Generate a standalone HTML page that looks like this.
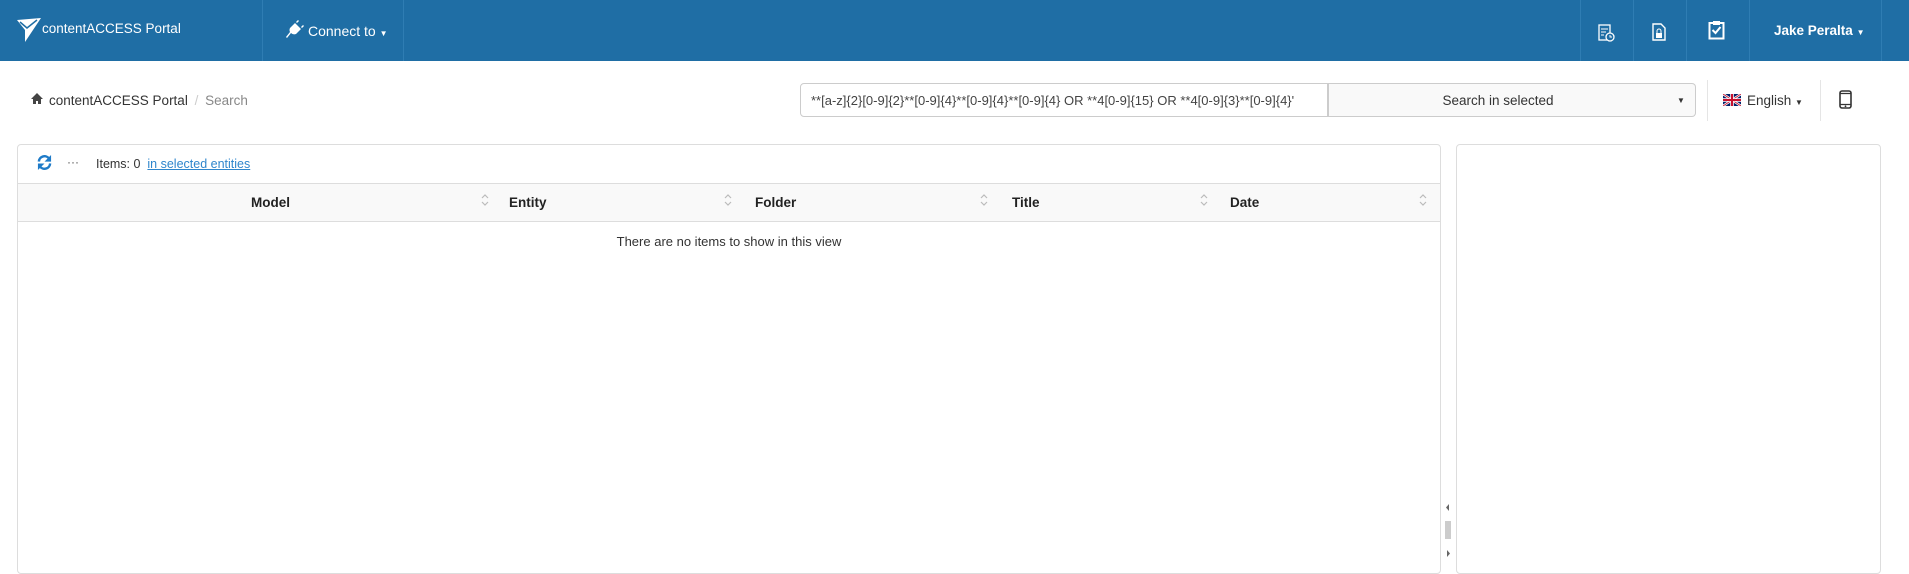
<!DOCTYPE html>
<html><head><meta charset="utf-8"><style>
*{box-sizing:border-box;margin:0;padding:0}
body{width:1909px;height:561px;overflow:hidden;background:#fff;font-family:"Liberation Sans",sans-serif;color:#333;position:relative}
.a{position:absolute;white-space:nowrap}
.nav{position:absolute;left:0;top:0;width:1909px;height:61px;background:#1f6ea5}
.vs{position:absolute;top:0;width:1px;height:61px;background:#2f7db3}
.w{color:#fff}
.th{font-weight:bold;font-size:13.5px;color:#222;top:195px}
.si{position:absolute;top:193px;width:8px;height:14px}
</style></head><body>
<div class="nav">
 <svg class="a" style="left:17px;top:18px" width="24" height="24" viewBox="0 0 24 24"><path d="M0 2 L24 0 L8 24 L8 12 Z" fill="#fff"/><path d="M3 4 L10 10 L20 2" fill="none" stroke="#1f6ea5" stroke-width="1.5"/></svg>
 <div class="a w" style="left:42px;top:21px;font-size:13.5px">contentACCESS Portal</div>
 <div class="vs" style="left:262px"></div>
 <svg class="a" style="left:284px;top:20px" width="20" height="20" viewBox="0 0 20 20"><path d="M11 3 L17 9 L12 14 Q9 15 7 13 L3 18 L2 17 L6 12 Q5 10 6 8 Z M12 2 L14 0 L15 1 L13 3 Z M17 7 L19 5 L20 6 L18 8 Z" fill="#fff"/></svg>
 <div class="a w" style="left:308px;top:23px;font-size:14px">Connect to <span style="font-size:8px">▼</span></div>
 <div class="vs" style="left:403px"></div>
 <div class="vs" style="left:1580px"></div><div class="vs" style="left:1633px"></div><div class="vs" style="left:1686px"></div><div class="vs" style="left:1749px"></div><div class="vs" style="left:1881px"></div>
 <svg class="a" style="left:1598px;top:24px" width="17" height="18" viewBox="0 0 17 18"><rect x="1" y="1" width="11" height="15" fill="none" stroke="#fff" stroke-width="1.3"/><path d="M3 5h7M3 8h5M3 11h3" stroke="#fff"/><circle cx="12" cy="13" r="4" fill="#1f6ea5" stroke="#fff" stroke-width="1.3"/><path d="M12 11v2h2" stroke="#fff" fill="none"/></svg>
 <svg class="a" style="left:1652px;top:23px" width="14" height="18" viewBox="0 0 14 18"><path d="M1 1h8l4 4v12H1z" fill="none" stroke="#fff" stroke-width="1.4"/><rect x="4" y="10" width="6" height="5" fill="#fff"/><path d="M5 10V8a2 2 0 0 1 4 0v2" fill="none" stroke="#fff"/></svg>
 <svg class="a" style="left:1708px;top:20px" width="17" height="20" viewBox="0 0 17 20"><rect x="1.5" y="3" width="14" height="15.5" fill="none" stroke="#fff" stroke-width="2"/><rect x="5" y="1" width="7" height="4" fill="#fff"/><path d="M4.5 10l3 3 5-6" fill="none" stroke="#fff" stroke-width="2"/></svg>
 <div class="a w" style="left:1774px;top:23px;font-size:13.5px;font-weight:bold">Jake Peralta <span style="font-size:8px">▼</span></div>
</div>
<svg class="a" style="left:31px;top:93px" width="12" height="11" viewBox="0 0 12 11"><path d="M6 0L12 6H10V11H7V8H5V11H2V6H0Z" fill="#444"/></svg>
<div class="a" style="left:49px;top:93px;font-size:13.5px;color:#333">contentACCESS Portal <span style="color:#ccc;margin:0 3px">/</span> <span style="color:#888">Search</span></div>
<div class="a" style="left:800px;top:83px;width:528px;height:34px;border:1px solid #ccc;border-radius:4px 0 0 4px;font-size:13px;padding:9px 10px;overflow:hidden;color:#444">**[a-z]{2}[0-9]{2}**[0-9]{4}**[0-9]{4}**[0-9]{4} OR **4[0-9]{15} OR **4[0-9]{3}**[0-9]{4}'</div>
<div class="a" style="left:1328px;top:83px;width:340px;height:34px;border:1px solid #ccc;background:#f9f9f9;text-align:center;font-size:13.5px;padding-top:9px">Search in selected</div>
<div class="a" style="left:1667px;top:83px;width:29px;height:34px;border:1px solid #ccc;border-left:none;border-radius:0 4px 4px 0;background:#f9f9f9;text-align:center;font-size:8px;padding-top:12px">▼</div>
<div class="a" style="left:1707px;top:80px;width:1px;height:41px;background:#e5e5e5"></div>
<svg class="a" style="left:1723px;top:94px" width="18" height="12" viewBox="0 0 60 40"><rect width="60" height="40" fill="#012169"/><path d="M0 0L60 40M60 0L0 40" stroke="#fff" stroke-width="8"/><path d="M0 0L60 40M60 0L0 40" stroke="#c8102e" stroke-width="3"/><path d="M30 0V40M0 20H60" stroke="#fff" stroke-width="12"/><path d="M30 0V40M0 20H60" stroke="#c8102e" stroke-width="7"/></svg>
<div class="a" style="left:1747px;top:93px;font-size:13.5px">English <span style="font-size:8px">▼</span></div>
<div class="a" style="left:1820px;top:80px;width:1px;height:41px;background:#e5e5e5"></div>
<svg class="a" style="left:1839px;top:90px" width="13" height="19" viewBox="0 0 13 19"><rect x="1" y="1" width="11" height="17" rx="2" fill="none" stroke="#333" stroke-width="1.6"/><path d="M1 3.5h11M1 14.5h11" stroke="#333" stroke-width="1.2"/><circle cx="6.5" cy="16.3" r="0.9" fill="#333"/></svg>
<div class="a" style="left:17px;top:144px;width:1424px;height:430px;border:1px solid #ddd;border-radius:4px"></div>
<div class="a" style="left:1456px;top:144px;width:425px;height:430px;border:1px solid #ddd;border-radius:4px"></div>
<svg class="a" style="left:37px;top:155px" width="15" height="15" viewBox="0 0 16 16"><path d="M2 7A6 6 0 0 1 13 4" fill="none" stroke="#1f7bc8" stroke-width="2.6"/><path d="M15 0V7H8Z" fill="#1f7bc8"/><path d="M14 9A6 6 0 0 1 3 12" fill="none" stroke="#1f7bc8" stroke-width="2.6"/><path d="M1 16V9H8Z" fill="#1f7bc8"/></svg>
<div class="a" style="left:67px;top:155px;font-size:12px;color:#555">···</div>
<div class="a" style="left:96px;top:157px;font-size:12.5px;color:#333">Items: 0 &nbsp;<span style="color:#2f86cc;text-decoration:underline">in selected entities</span></div>
<div class="a" style="left:18px;top:183px;width:1422px;height:39px;background:#f9f9f9;border-top:1px solid #ddd;border-bottom:1px solid #ddd"></div>
<div class="a th" style="left:251px">Model</div>
<div class="a th" style="left:509px">Entity</div>
<div class="a th" style="left:755px">Folder</div>
<div class="a th" style="left:1012px">Title</div>
<div class="a th" style="left:1230px">Date</div>
<svg class="si" style="left:481px" viewBox="0 0 8 14"><path d="M1 5L4 2L7 5M1 9L4 12L7 9" fill="none" stroke="#bbb" stroke-width="1.2"/></svg>
<svg class="si" style="left:724px" viewBox="0 0 8 14"><path d="M1 5L4 2L7 5M1 9L4 12L7 9" fill="none" stroke="#bbb" stroke-width="1.2"/></svg>
<svg class="si" style="left:980px" viewBox="0 0 8 14"><path d="M1 5L4 2L7 5M1 9L4 12L7 9" fill="none" stroke="#bbb" stroke-width="1.2"/></svg>
<svg class="si" style="left:1200px" viewBox="0 0 8 14"><path d="M1 5L4 2L7 5M1 9L4 12L7 9" fill="none" stroke="#bbb" stroke-width="1.2"/></svg>
<svg class="si" style="left:1419px" viewBox="0 0 8 14"><path d="M1 5L4 2L7 5M1 9L4 12L7 9" fill="none" stroke="#bbb" stroke-width="1.2"/></svg>
<div class="a" style="left:0;width:1458px;text-align:center;top:234px;font-size:13px;color:#333">There are no items to show in this view</div>
<svg class="a" style="left:1444px;top:503px" width="8" height="56" viewBox="0 0 8 56"><path d="M5 1L2 4.5L5 8Z" fill="#666"/><path d="M1 19h6M1 21h6M1 23h6M1 25h6M1 27h6M1 29h6M1 31h6M1 33h6M1 35h6" stroke="#999" stroke-width="1"/><path d="M3 47L6 50.5L3 54Z" fill="#666"/></svg>
</body></html>
